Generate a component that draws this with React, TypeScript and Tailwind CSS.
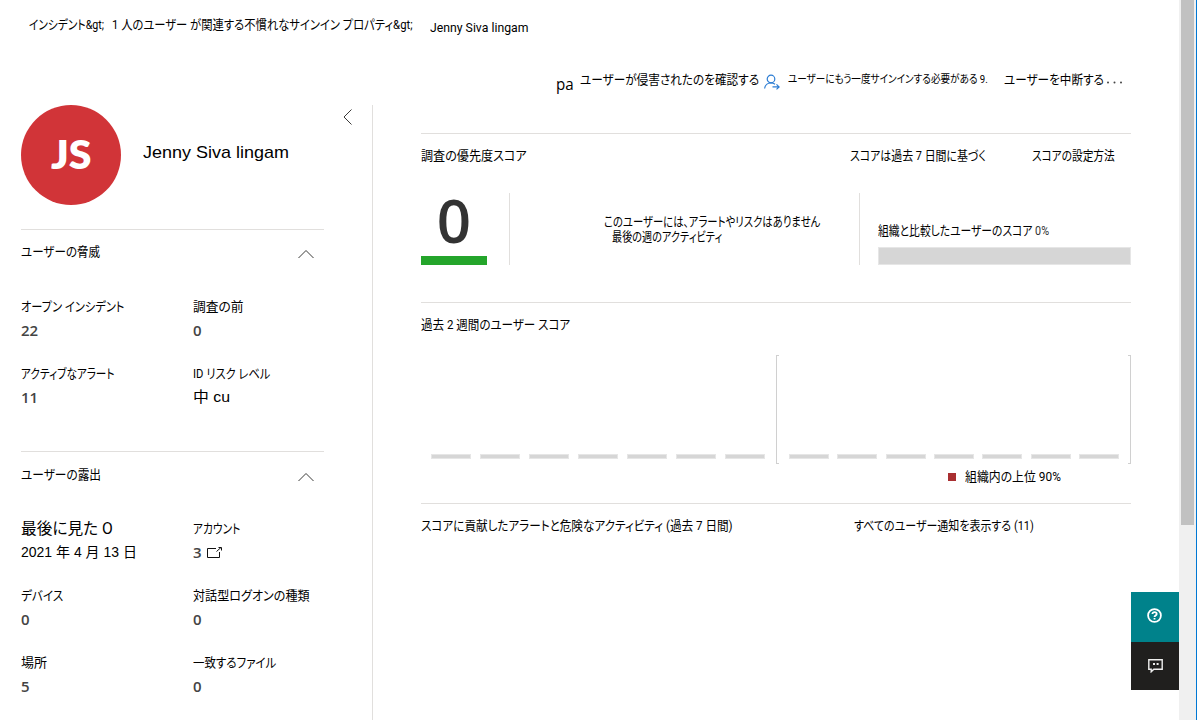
import { useLayoutEffect, useRef, useState, type ReactNode } from "react";

type FitProps = { w: number; className?: string; children: ReactNode };

/** Single line of text condensed or widened to a given width. */
function Fit({ w, className = "", children }: FitProps) {
  const ref = useRef<HTMLSpanElement>(null);
  const [scale, setScale] = useState(1);
  useLayoutEffect(() => {
    if (ref.current) setScale(w / ref.current.offsetWidth);
  }, [w]);
  return (
    <span className={`block h-4 shrink-0 leading-4 whitespace-nowrap ${className}`} style={{ width: w }}>
      <span ref={ref} className="inline-block origin-left" style={{ transform: `scaleX(${scale})` }}>
        {children}
      </span>
    </span>
  );
}

function ChevronUp() {
  return (
    <svg className="mr-2.5 h-[10px] w-4" viewBox="0 0 16 10" fill="none" stroke="#3b3a39" strokeWidth="1">
      <path d="M.5 9 8 1.5 15.5 9" />
    </svg>
  );
}

type FieldProps = { label: string; w: number; labelClass?: string; children: ReactNode };

function Field({ label, w, labelClass = "", children }: FieldProps) {
  return (
    <div className="flex flex-col gap-[7px]">
      <Fit w={w} className={labelClass}>{label}</Fit>
      <div className="flex h-4 items-center font-['Open_Sans',sans-serif] text-[15px] leading-4 font-semibold text-[#444]">
        {children}
      </div>
    </div>
  );
}

function SectionTitle({ w, children }: { w: number; children: string }) {
  return (
    <div className="flex h-[21px] items-start justify-between">
      <Fit w={w}>{children}</Fit>
      <div className="pt-[5px]">
        <ChevronUp />
      </div>
    </div>
  );
}

function Sidebar() {
  return (
    <aside className="w-[372px] shrink-0 pl-[21px]">
      <div className="flex h-[124px] items-start">
        <div className="flex size-[100px] items-center justify-center rounded-full bg-[#d13438] font-['Lato',sans-serif] text-[39px] font-extrabold text-white">
          <Fit w={41} className="h-[40px] leading-[39px]">JS</Fit>
        </div>
        <Fit w={146} className="mt-10 ml-[22px] font-['Liberation_Sans',sans-serif] text-[17px]">
          Jenny Siva lingam
        </Fit>
        <svg className="mt-1 ml-[54px] h-4 w-[9px]" viewBox="0 0 9 16" fill="none" stroke="#3b3a39" strokeWidth="1">
          <path d="M8.5.5 1 8l7.5 7.5" />
        </svg>
      </div>
      <section className="h-[222px] w-[303px] border-t border-[#e1dfdd] pt-[14px]">
        <SectionTitle w={79}>ユーザーの脅威</SectionTitle>
        <div className="mt-[34px] grid grid-cols-[172px_1fr] gap-y-[28px]">
          <Field label="オープン インシデント" w={103}>22</Field>
          <Field label="調査の前" w={51}>0</Field>
          <Field label="アクティブなアラート" w={94}>11</Field>
          <Field label="ID リスク レベル" w={77}>
            <Fit w={37} className="font-['Liberation_Sans','Noto_Sans_CJK_JP',sans-serif] font-normal text-black">中 cu</Fit>
          </Field>
        </div>
      </section>
      <section className="w-[303px] border-t border-[#e1dfdd] pt-[15px]">
        <SectionTitle w={80}>ユーザーの露出</SectionTitle>
        <div className="mt-[33px] grid grid-cols-[172px_1fr] gap-y-[28px]">
          <Field label="最後に見た O" w={92} labelClass="text-[16px]">
            <Fit w={116} className="font-['Liberation_Sans','Noto_Sans_CJK_JP',sans-serif] text-[14px] font-normal text-black">
              2021 年 4 月 13 日
            </Fit>
          </Field>
          <Field label="アカウント" w={47}>
            3
            <svg className="ml-[5px] h-3 w-4" viewBox="0 0 16 12" fill="none" stroke="#111" strokeWidth="1">
              <path d="M9 2.5H.5v9h12V6M9.5 5.5 14 1.5M11.5 1.5h3v3" />
            </svg>
          </Field>
          <Field label="デバイス" w={42}>0</Field>
          <Field label="対話型ログオンの種類" w={117}>0</Field>
          <Field label="場所" w={26}>5</Field>
          <Field label="一致するファイル" w={83}>0</Field>
        </div>
      </section>
    </aside>
  );
}

function Bars({ className }: { className: string }) {
  return (
    <div className={`flex items-end justify-between ${className}`}>
      {Array.from({ length: 7 }, (_, i) => (
        <div key={i} className="h-[5px] w-10 border border-[#e6e6e6] bg-[#d6d6d6]" />
      ))}
    </div>
  );
}

function Main() {
  return (
    <main className="flex-1 border-l border-[#e1dfdd] pt-7 pl-12">
      <div className="w-[710px]">
        <section className="h-[169px] border-t border-[#e1dfdd] pt-[14px]">
          <div className="flex">
            <Fit w={106}>調査の優先度スコア</Fit>
            <Fit w={136} className="ml-[323px]">スコアは過去 7 日間に基づく</Fit>
            <Fit w={83} className="ml-[46px]">スコアの設定方法</Fit>
          </div>
          <div className="mt-[29px] flex h-[72px]">
            <div className="flex w-[66px] flex-col items-center justify-between">
              <span className="h-[60px] font-['Open_Sans',sans-serif] text-[60px] leading-[55px] font-semibold text-[#333]">0</span>
              <div className="h-[9px] w-full bg-[#24a52b]" />
            </div>
            <div className="ml-[22px] w-[350px] border-l border-[#e1dfdd] pt-[21px] pl-[94px]">
              <Fit w={216} className="h-[15px]">このユーザーには、アラートやリスクはありません</Fit>
              <Fit w={110} className="ml-2">最後の週のアクティビティ</Fit>
            </div>
            <div className="flex-1 border-l border-[#e1dfdd] pt-[30px] pl-[18px]">
              <Fit w={171}>
                組織と比較したユーザーのスコア <span className="text-[#333]">0%</span>
              </Fit>
              <div className="mt-2 h-[18px] w-[253px] border border-[#e6e6e6] bg-[#d6d6d6]" />
            </div>
          </div>
        </section>
        <section className="h-[201px] border-t border-[#e1dfdd] pt-[14px]">
          <Fit w={149}>過去 2 週間のユーザー スコア</Fit>
          <div className="mt-[22px] flex h-[109px]">
            <Bars className="ml-[10px] w-[334px] pb-[5px]" />
            <div className="ml-[11px] flex w-[355px]">
              <div className="w-[3px] border-y border-l border-[#d0d0d0]" />
              <Bars className="ml-[10px] w-[330px] pb-[5px]" />
              <div className="ml-auto w-[3px] border-y border-r border-[#d0d0d0]" />
            </div>
          </div>
          <div className="mt-[5px] ml-[527px] flex items-center">
            <div className="size-2 bg-[#a92f31]" />
            <Fit w={96} className="ml-[9px]">組織内の上位 90%</Fit>
          </div>
        </section>
        <section className="flex border-t border-[#e1dfdd] pt-[14px]">
          <Fit w={312}>スコアに貢献したアラートと危険なアクティビティ (過去 7 日間)</Fit>
          <Fit w={180} className="ml-[121px]">すべてのユーザー通知を表示する (11)</Fit>
        </section>
      </div>
    </main>
  );
}

export default function App() {
  return (
    <div className="relative flex h-[720px] w-[1197px] overflow-hidden bg-white font-['Roboto','Noto_Sans_CJK_JP',sans-serif] text-[13px] text-black [font-feature-settings:'palt']">
      <div className="flex w-[1179px] flex-col">
        <nav className="flex h-[54px] items-start pt-[17px] pl-[29px]">
          <Fit w={75}>インシデント&amp;gt;</Fit>
          <Fit w={301} className="ml-2">1 人のユーザー が関連する不慣れなサインイン プロパティ&amp;gt;</Fit>
          <Fit w={98} className="mt-[3px] ml-[17px]">Jenny Siva lingam</Fit>
        </nav>
        <div className="flex h-[51px] items-start pt-[18px] pl-[556px]">
          <Fit w={18} className="mt-1 font-['Open_Sans',sans-serif] text-[16px]">pa</Fit>
          <Fit w={179} className="ml-1.5">ユーザーが侵害されたのを確認する</Fit>
          <svg className="mt-[2px] ml-[5px] size-4" viewBox="0 0 16 16" fill="none" stroke="#2b7cd3" strokeWidth="1.2">
            <circle cx="7" cy="5" r="3.8" />
            <path d="M.6 14.5C.9 11 3.7 8.8 7 8.8c1.7 0 3 .5 4 1.4M8.5 12.9H15M12.5 10.4l2.6 2.5-2.6 2.5" />
          </svg>
          <Fit w={200} className="ml-2 text-[11px]">ユーザーにもう一度サインインする必要がある 9.</Fit>
          <Fit w={100} className="ml-4">ユーザーを中断する</Fit>
          <svg className="mt-[9px] ml-[2px] h-[3px] w-[17px]" viewBox="0 0 17 3" fill="#444">
            <circle cx="2" cy="1.5" r="1" />
            <circle cx="8.5" cy="1.5" r="1" />
            <circle cx="15" cy="1.5" r="1" />
          </svg>
        </div>
        <div className="flex h-[615px]">
          <Sidebar />
          <Main />
        </div>
      </div>
      <div className="flex w-[18px] justify-center border-r border-[#0078d4] bg-[#f0f0f0]">
        <div className="h-[525px] w-[13px] bg-[#c1c1c1]" />
      </div>
      <div className="absolute top-[592px] left-[1131px] w-12">
        <div className="flex h-[50px] items-center justify-center bg-[#00828b] pr-px pb-[3px]">
          <svg className="size-[15px]" viewBox="0 0 15 15" fill="none" stroke="#fff" strokeWidth="1.8">
            <circle cx="7.5" cy="7.5" r="6.4" />
            <path d="M5.4 6c0-1.2.9-1.9 2.1-1.9S9.7 4.8 9.7 5.9c0 1.5-2.2 1.5-2.2 3M7.5 10v1.5" />
          </svg>
        </div>
        <div className="flex h-12 items-center justify-center bg-[#201f1e] pb-px">
          <svg className="size-[15px]" viewBox="0 0 15 15" fill="none" stroke="#eee" strokeWidth="1.4">
            <path d="M.8 1.7h13.4v9.6H5.8L3.2 13.8v-2.5H.8z" />
            <path d="M5 6h2M8.6 6h2" strokeWidth="2" />
          </svg>
        </div>
      </div>
    </div>
  );
}
